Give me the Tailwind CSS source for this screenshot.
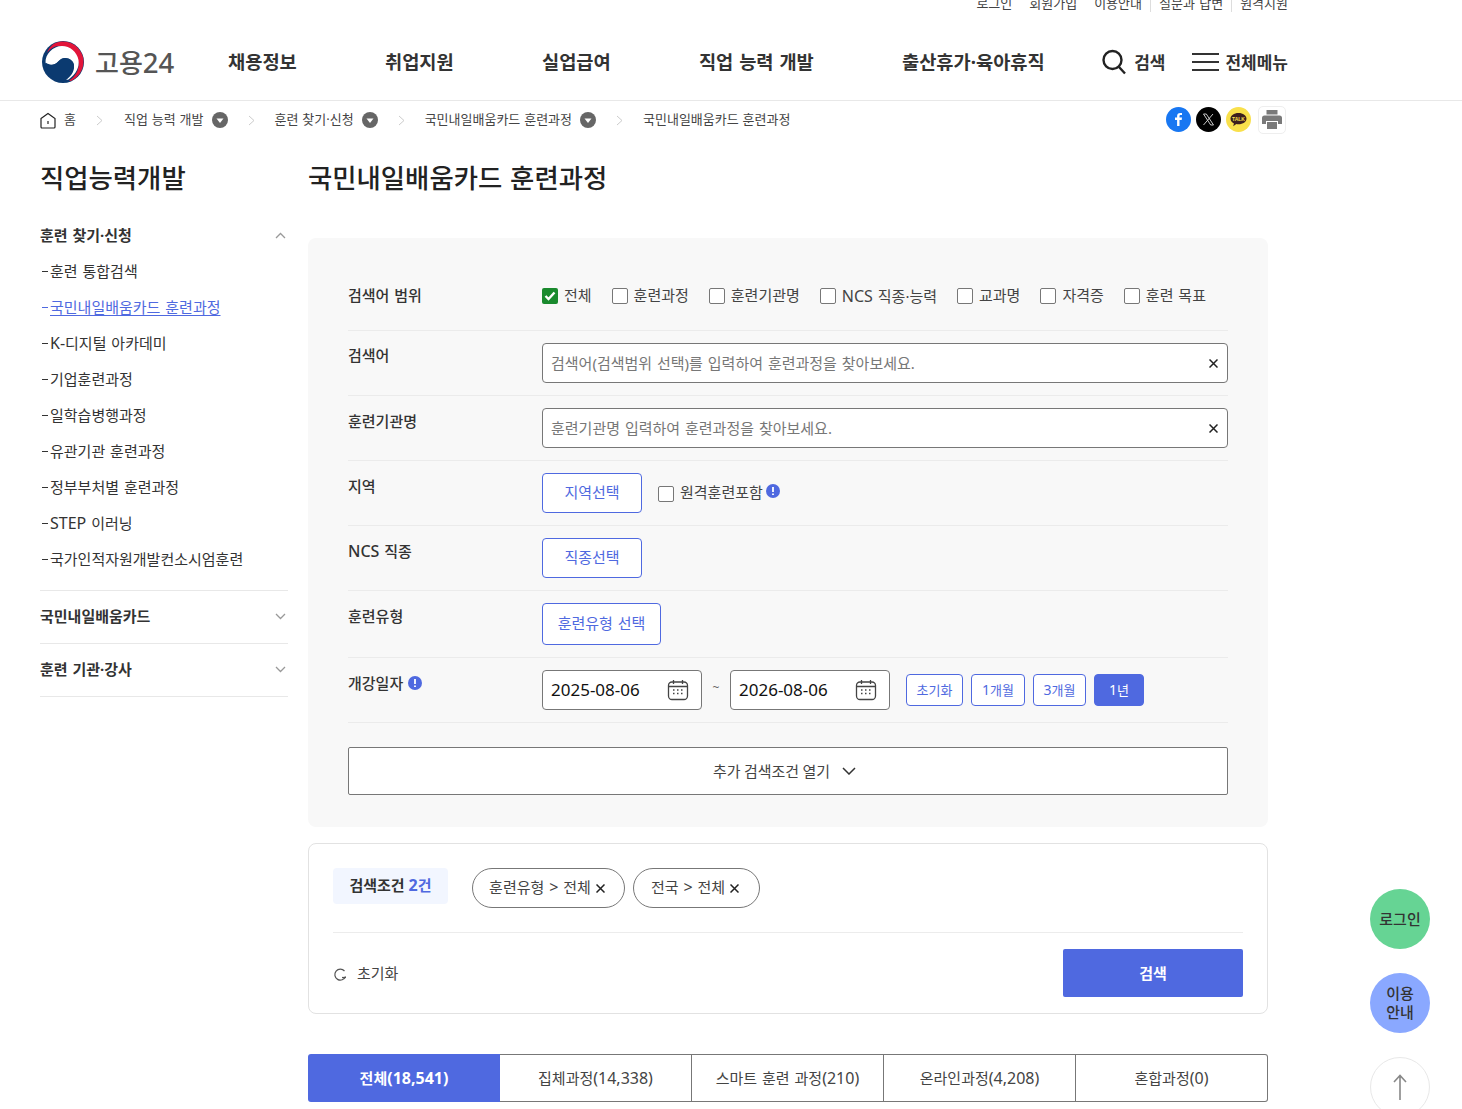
<!DOCTYPE html>
<html lang="ko"><head><meta charset="utf-8"><title>고용24</title>
<script src="https://cdn.jsdelivr.net/npm/@tailwindcss/browser@4"></script></head>
<body class="bg-white">
<div class="relative w-[1462px] h-[1109px] overflow-hidden bg-white text-[#222] [word-spacing:1px] font-['Noto_Sans','Noto_Sans_CJK_KR',sans-serif]">

<!-- util -->
<div class="h-[12px] pr-[174px] flex justify-end items-end text-[13px] leading-[18px] text-[#444] overflow-hidden">
  <span class="shrink-0 px-[8px]">로그인</span><span class="shrink-0 px-[9px]">회원가입</span><span class="shrink-0 px-[8px]">이용안내</span>
  <span class="shrink-0 border-l border-[#ddd] px-[8px]">질문과 답변</span>
  <span class="shrink-0 border-l border-[#ddd] pl-[8px]">원격지원</span>
</div>

<!-- header -->
<header class="h-[89px] border-b border-[#e8e8e8] pl-[42px] pr-[174px] flex items-center pt-[12px]">
  <svg class="w-[42px] h-[42px] shrink-0" viewBox="0 0 42 42"><circle cx="21" cy="21" r="21" fill="#0b3a70"/><path d="M17 1C27 -1 38 5 41 16c2 9-2 19-12 24l-2-.5c8-5 11-13 9-20C33 10 25 5 17 5 12 5 8 8 5 12 7 6 11 2 17 1Z" fill="#e2153a"/><path d="M3.500 22C3 13 11 5 20 5c8 0 15 6 16.500 14 1 7-2 14-10 19.500L24 39c5-4 8-8 8-13 0-5-4-9-9-9-5 0-7 5-10 6-4 2-7 1-9.500-1Z" fill="#fff"/><path d="M32 24c0 5-3 10-8 14.500-1 .5-2 .6-3 .5 -4 0-9-2-13-7-3-3-4-7-4.500-10.500 3 2 6 3 9.500 1.500 3-1.500 5-6 10-6s9 3.500 9 7Z" fill="#0b3a70"/></svg>
  <span class="ml-[11px] w-[133px] shrink-0 text-[26px] font-medium text-[#555] leading-none mt-[1px]">고용<span class="text-[27.500px]">24</span></span>
  <nav class="flex gap-[88.200px] text-[18.700px] leading-none font-bold text-[#333] mt-[1px]">
    <span>채용정보</span><span>취업지원</span><span>실업급여</span><span>직업 능력 개발</span><span>출산휴가·육아휴직</span>
  </nav>
  <div class="ml-auto flex items-center text-[17px] font-bold text-[#333] leading-none">
    <svg class="w-[24px] h-[26px] mr-[8px]" viewBox="0 0 24 26" fill="none" stroke="#222" stroke-width="2.400"><circle cx="10.500" cy="11" r="9"/><path d="M17 18l6 6.500"/></svg>
    <span>검색</span>
    <svg class="w-[27px] h-[20px] ml-[27px] mr-[6px]" viewBox="0 0 27 20" fill="none" stroke="#333" stroke-width="2.200"><path d="M0 2h27M0 10h27M0 18h27"/></svg>
    <span>전체메뉴</span>
  </div>
</header>

<!-- breadcrumb -->
<div class="h-[37px] pt-[1px] pl-[40px] pr-[176px] flex items-center text-[13px] text-[#444] [word-spacing:0.500px]">
  <svg class="w-[16px] h-[17px] mr-[8px]" viewBox="0 0 16 17" fill="none" stroke="#222" stroke-width="1.200"><path d="M1 6.500 8 1.500l7 5V15a1 1 0 0 1-1 1H2a1 1 0 0 1-1-1Z"/><path d="M8 9v3"/></svg>
  <span>홈</span>
  <svg class="w-[7px] h-[11px] mx-[20.500px]" viewBox="0 0 7 11" fill="none" stroke="#ccc"><path d="M1 1l5 4.500-5 4.500"/></svg>
  <span>직업 능력 개발</span>
  <svg class="w-[16px] h-[16px] ml-[8px]" viewBox="0 0 16 16"><circle cx="8" cy="8" r="8" fill="#666"/><path d="M4.500 6.500h7L8 11Z" fill="#fff"/></svg>
  <svg class="w-[7px] h-[11px] mx-[20px]" viewBox="0 0 7 11" fill="none" stroke="#ccc"><path d="M1 1l5 4.500-5 4.500"/></svg>
  <span>훈련 찾기·신청</span>
  <svg class="w-[16px] h-[16px] ml-[8px]" viewBox="0 0 16 16"><circle cx="8" cy="8" r="8" fill="#666"/><path d="M4.500 6.500h7L8 11Z" fill="#fff"/></svg>
  <svg class="w-[7px] h-[11px] mx-[20px]" viewBox="0 0 7 11" fill="none" stroke="#ccc"><path d="M1 1l5 4.500-5 4.500"/></svg>
  <span>국민내일배움카드 훈련과정</span>
  <svg class="w-[16px] h-[16px] ml-[8px]" viewBox="0 0 16 16"><circle cx="8" cy="8" r="8" fill="#666"/><path d="M4.500 6.500h7L8 11Z" fill="#fff"/></svg>
  <svg class="w-[7px] h-[11px] mx-[20px]" viewBox="0 0 7 11" fill="none" stroke="#ccc"><path d="M1 1l5 4.500-5 4.500"/></svg>
  <span>국민내일배움카드 훈련과정</span>
  <div class="ml-auto flex items-center gap-[5px] -mt-[1px]">
    <svg class="w-[25px] h-[25px]" viewBox="0 0 25 25"><circle cx="12.500" cy="12.500" r="12.500" fill="#1877f2"/><path d="M13.500 19v-6h2.200l.3-2.400h-2.500V9.200c0-.7.300-1.100 1.200-1.100H16V6c-.4 0-1.100-.1-1.800-.1-1.900 0-3.100 1.100-3.100 3.100v1.600H9V13h2.100v6Z" fill="#fff"/></svg>
    <svg class="w-[25px] h-[25px]" viewBox="0 0 25 25"><circle cx="12.500" cy="12.500" r="12.500" fill="#000"/><path d="M7.500 7h2.800l7.200 11h-2.800ZM17 7l-9.500 11" fill="none" stroke="#ddd" stroke-width=".9"/></svg>
    <svg class="w-[25px] h-[25px]" viewBox="0 0 25 25"><circle cx="12.500" cy="12.500" r="12.500" fill="#f9e04b"/><path d="M12.500 6C8 6 4.500 8.500 4.500 11.700c0 2 1.400 3.700 3.400 4.700l-.7 2.800 3.200-2.200c.6.100 1.300.2 2.100.2 4.500 0 8-2.500 8-5.500S17 6 12.500 6Z" fill="#3c1e1e"/><text x="12.500" y="13.600" text-anchor="middle" font-size="5" font-weight="700" fill="#f9e04b" font-family="Liberation Sans">TALK</text></svg>
    <div class="ml-[2px] w-[28px] h-[28px] border border-[#eee] rounded-[5px] flex items-center justify-center">
      <svg class="w-[20px] h-[19px]" viewBox="0 0 20 19" fill="#7a7a7a"><path d="M4.500 0h11v4.500h-11Z"/><path d="M2.500 5.500h15A2.500 2.500 0 0 1 20 8v6h-4v-3H4v3H0V8a2.500 2.500 0 0 1 2.500-2.500Z"/><path d="M5 12h10v7H5Z"/></svg>
    </div>
  </div>
</div>

<div class="flex pl-[40px]">
  <!-- sidebar -->
  <aside class="w-[248px] shrink-0 pt-[21px]">
    <h2 class="text-[26.400px] font-medium leading-[38px] text-[#222]">직업능력개발</h2>
    <div class="mt-[26px]">
      <div class="flex items-center justify-between h-[24px] text-[15px] font-bold text-[#333]">훈련 찾기·신청
        <svg class="w-[11px] h-[7px] mr-[2px]" viewBox="0 0 11 7" fill="none" stroke="#999" stroke-width="1.300"><path d="M1 6l4.500-4.500L10 6"/></svg></div>
      <ul class="mt-[6px] text-[15px] leading-[36px] text-[#333]">
        <li class="flex items-center"><span class="w-[6px] h-[1px] bg-[#333] ml-[2px] mr-[2px]"></span>훈련 통합검색</li>
        <li class="flex items-center text-[#4f69e0]"><span class="w-[6px] h-[1px] bg-[#4f69e0] ml-[2px] mr-[2px]"></span><span class="underline underline-offset-2">국민내일배움카드 훈련과정</span></li>
        <li class="flex items-center"><span class="w-[6px] h-[1px] bg-[#333] ml-[2px] mr-[2px]"></span><span><span class="text-[16px]">K-</span>디지털 아카데미</span></li>
        <li class="flex items-center"><span class="w-[6px] h-[1px] bg-[#333] ml-[2px] mr-[2px]"></span>기업훈련과정</li>
        <li class="flex items-center"><span class="w-[6px] h-[1px] bg-[#333] ml-[2px] mr-[2px]"></span>일학습병행과정</li>
        <li class="flex items-center"><span class="w-[6px] h-[1px] bg-[#333] ml-[2px] mr-[2px]"></span>유관기관 훈련과정</li>
        <li class="flex items-center"><span class="w-[6px] h-[1px] bg-[#333] ml-[2px] mr-[2px]"></span>정부부처별 훈련과정</li>
        <li class="flex items-center"><span class="w-[6px] h-[1px] bg-[#333] ml-[2px] mr-[2px]"></span><span><span class="text-[16px]">STEP</span> 이러닝</span></li>
        <li class="flex items-center"><span class="w-[6px] h-[1px] bg-[#333] ml-[2px] mr-[2px]"></span>국가인적자원개발컨소시엄훈련</li>
      </ul>
      <div class="mt-[13px] border-t border-[#e8e8e8] h-[53px] flex items-center justify-between pb-[2px] text-[15px] font-bold text-[#333]">국민내일배움카드
        <svg class="w-[11px] h-[7px] mr-[2px]" viewBox="0 0 11 7" fill="none" stroke="#999" stroke-width="1.300"><path d="M1 1l4.500 4.500L10 1"/></svg></div>
      <div class="border-t border-b border-[#e8e8e8] h-[54px] flex items-center justify-between pb-[2px] text-[15px] font-bold text-[#333]">훈련 기관·강사
        <svg class="w-[11px] h-[7px] mr-[2px]" viewBox="0 0 11 7" fill="none" stroke="#999" stroke-width="1.300"><path d="M1 1l4.500 4.500L10 1"/></svg></div>
    </div>
  </aside>

  <!-- main -->
  <main class="ml-[20px] w-[960px] shrink-0 pt-[21px]">
    <h1 class="text-[26.400px] font-medium leading-[38px] text-[#222]">국민내일배움카드 훈련과정</h1>

    <section class="mt-[41px] h-[589px] bg-[#f8f8f8] rounded-[8px] px-[40px] pt-[22px] text-[15px]">
      <div class="h-[71px] border-b border-[#ebebeb] flex items-center pt-[1px]">
        <div class="w-[194px] font-medium text-[#333]">검색어 범위</div>
        <div class="flex items-center gap-[20px] text-[#444]">
          <label class="flex items-center gap-[6px]"><span class="w-[16px] h-[16px] bg-[#1a8a2e] rounded-[2px] flex items-center justify-center"><svg class="w-[12px] h-[12px]" viewBox="0 0 12 12" fill="none" stroke="#fff" stroke-width="2.400"><path d="M1.500 6l3 3L10.500 2.500"/></svg></span>전체</label>
          <label class="flex items-center gap-[6px]"><span class="w-[16px] h-[16px] bg-white border border-[#777] rounded-[2px]"></span>훈련과정</label>
          <label class="flex items-center gap-[6px]"><span class="w-[16px] h-[16px] bg-white border border-[#777] rounded-[2px]"></span>훈련기관명</label>
          <label class="flex items-center gap-[6px]"><span class="w-[16px] h-[16px] bg-white border border-[#777] rounded-[2px]"></span><span><span class="text-[16px]">NCS</span> 직종·능력</span></label>
          <label class="flex items-center gap-[6px]"><span class="w-[16px] h-[16px] bg-white border border-[#777] rounded-[2px]"></span>교과명</label>
          <label class="flex items-center gap-[6px]"><span class="w-[16px] h-[16px] bg-white border border-[#777] rounded-[2px]"></span>자격증</label>
          <label class="flex items-center gap-[6px]"><span class="w-[16px] h-[16px] bg-white border border-[#777] rounded-[2px]"></span>훈련 목표</label>
        </div>
      </div>

      <div class="h-[65px] border-b border-[#ebebeb] flex pt-[12px]">
        <div class="w-[194px] font-medium text-[#333] leading-[24px]">검색어</div>
        <div class="w-[686px] h-[40px] bg-white border border-[#777] rounded-[4px] flex items-center justify-between pl-[8px] pr-[9px] text-[#777]">검색어(검색범위 선택)를 입력하여 훈련과정을 찾아보세요.
          <svg class="w-[9px] h-[9px]" viewBox="0 0 9 9" stroke="#222" stroke-width="1.500"><path d="M.5.500l8 8M8.500.500l-8 8"/></svg></div>
      </div>
      <div class="h-[65px] border-b border-[#ebebeb] flex pt-[12px]">
        <div class="w-[194px] font-medium text-[#333] leading-[26px]">훈련기관명</div>
        <div class="w-[686px] h-[40px] bg-white border border-[#777] rounded-[4px] flex items-center justify-between pl-[8px] pr-[9px] text-[#777]">훈련기관명 입력하여 훈련과정을 찾아보세요.
          <svg class="w-[9px] h-[9px]" viewBox="0 0 9 9" stroke="#222" stroke-width="1.500"><path d="M.5.500l8 8M8.500.500l-8 8"/></svg></div>
      </div>
      <div class="h-[65px] border-b border-[#ebebeb] flex pt-[12px]">
        <div class="w-[194px] font-medium text-[#333] leading-[26px]">지역</div>
        <div class="w-[100px] h-[40px] bg-white border border-[#4f69e0] rounded-[4px] flex items-center justify-center pb-[2px] text-[#4f69e0]">지역선택</div>
        <label class="ml-[16px] h-[40px] flex items-center gap-[6px] pb-[1px] text-[#444]"><span class="w-[16px] h-[16px] mt-[2px] bg-white border border-[#777] rounded-[2px]"></span>원격훈련포함
          <svg class="w-[14px] h-[14px] -ml-[3px] -mt-[3px]" viewBox="0 0 14 14"><circle cx="7" cy="7" r="7" fill="#4f69e0"/><path d="M7 3v5M7 9.500v1.500" stroke="#fff" stroke-width="1.800"/></svg></label>
      </div>
      <div class="h-[65px] border-b border-[#ebebeb] flex pt-[12px]">
        <div class="w-[194px] font-medium text-[#333] leading-[26px]"><span class="text-[16px]">NCS</span> 직종</div>
        <div class="w-[100px] h-[40px] bg-white border border-[#4f69e0] rounded-[4px] flex items-center justify-center pb-[2px] text-[#4f69e0]">직종선택</div>
      </div>
      <div class="h-[67px] border-b border-[#ebebeb] flex pt-[12px]">
        <div class="w-[194px] font-medium text-[#333] leading-[26px]">훈련유형</div>
        <div class="w-[119px] h-[42px] bg-white border border-[#4f69e0] rounded-[4px] flex items-center justify-center pb-[2px] text-[#4f69e0]">훈련유형 선택</div>
      </div>
      <div class="h-[65px] border-b border-[#ebebeb] flex pt-[12px]">
        <div class="w-[194px] font-medium text-[#333] flex items-center h-[26px] gap-[5px] pt-[1px]">개강일자 <svg class="w-[14px] h-[14px] -mt-[1px]" viewBox="0 0 14 14"><circle cx="7" cy="7" r="7" fill="#4f69e0"/><path d="M7 3v5M7 9.500v1.500" stroke="#fff" stroke-width="1.800"/></svg></div>
        <div class="w-[160px] h-[40px] bg-white border border-[#777] rounded-[4px] flex items-center justify-between pl-[8px] pr-[12px] text-[17px] text-[#111]">2025-08-06
          <svg class="w-[22px] h-[22px]" viewBox="0 0 22 22" fill="none" stroke="#444" stroke-width="1.300"><rect x="1.500" y="3" width="19" height="17.500" rx="3.500"/><path d="M1.500 7.500h19M6.500 1v4M15.500 1v4"/><path d="M6 11h2M10 11h2M14 11h2M6 14.500h2M10 14.500h2M14 14.500h2" stroke-dasharray="1.500 0.500"/></svg></div>
        <div class="w-[28px] text-center text-[12px] leading-[36px] text-[#666]">~</div>
        <div class="w-[160px] h-[40px] bg-white border border-[#777] rounded-[4px] flex items-center justify-between pl-[8px] pr-[12px] text-[17px] text-[#111]">2026-08-06
          <svg class="w-[22px] h-[22px]" viewBox="0 0 22 22" fill="none" stroke="#444" stroke-width="1.300"><rect x="1.500" y="3" width="19" height="17.500" rx="3.500"/><path d="M1.500 7.500h19M6.500 1v4M15.500 1v4"/><path d="M6 11h2M10 11h2M14 11h2M6 14.500h2M10 14.500h2M14 14.500h2" stroke-dasharray="1.500 0.500"/></svg></div>
        <div class="ml-[16px] mt-[4px] flex gap-[8px] text-[13px] text-[#4f69e0] h-[32px]">
          <span class="w-[57px] border border-[#4f69e0] rounded-[4px] bg-white flex items-center justify-center pt-[1px]">초기화</span>
          <span class="w-[54px] border border-[#4f69e0] rounded-[4px] bg-white flex items-center justify-center pb-[1px]"><span><span class="text-[14px]">1</span>개월</span></span>
          <span class="w-[53px] border border-[#4f69e0] rounded-[4px] bg-white flex items-center justify-center pb-[1px]"><span><span class="text-[14px]">3</span>개월</span></span>
          <span class="w-[50px] border border-[#4f69e0] rounded-[4px] bg-[#4f69e0] text-white flex items-center justify-center pb-[1px]"><span><span class="text-[14px]">1</span>년</span></span>
        </div>
      </div>
      <div class="mt-[24px] h-[48px] bg-white border border-[#777] rounded-[2px] flex items-center justify-center gap-[12px] pr-[7px] text-[#444] [word-spacing:-0.500px]">추가 검색조건 열기
        <svg class="w-[14px] h-[8px]" viewBox="0 0 14 8" fill="none" stroke="#333" stroke-width="1.500"><path d="M1 1l6 6 6-6"/></svg></div>
    </section>

    <section class="mt-[16px] h-[171px] border border-[#e2e2e2] rounded-[8px] px-[24px] pt-[24px] text-[15px]">
      <div class="h-[65px] border-b border-[#ececec] flex items-start">
        <div class="w-[115px] h-[36px] rounded-[4px] bg-[#f2f6ff] flex items-center justify-center pb-[2px] font-bold text-[#333] gap-[4px]">검색조건 <span class="text-[#4f69e0]"><span class="text-[16px]">2</span>건</span></div>
        <div class="ml-[24px] h-[40px] w-[153px] rounded-full border border-[#777] bg-white flex items-center justify-center gap-[5px] pb-[3px] pr-[3px] text-[#444]"><span>훈련유형 <span class="text-[16px]">&gt;</span> 전체</span> <svg class="w-[9px] h-[9px] mt-[4px]" viewBox="0 0 9 9" stroke="#222" stroke-width="1.500"><path d="M.5.500l8 8M8.500.500l-8 8"/></svg></div>
        <div class="ml-[8px] h-[40px] w-[127px] rounded-full border border-[#777] bg-white flex items-center justify-center gap-[5px] pb-[3px] pr-[3px] text-[#444]"><span>전국 <span class="text-[16px]">&gt;</span> 전체</span> <svg class="w-[9px] h-[9px] mt-[4px]" viewBox="0 0 9 9" stroke="#222" stroke-width="1.500"><path d="M.5.500l8 8M8.500.500l-8 8"/></svg></div>
      </div>
      <div class="mt-[16px] flex items-center justify-between">
        <div class="flex items-center gap-[10px] text-[#444] pt-[1px]"><svg class="w-[14px] h-[14px] mt-[2px]" viewBox="0 0 14 14" fill="none" stroke="#555" stroke-width="1.200"><path d="M11.500 3A5.500 5.500 0 1 0 12.500 8.500"/><path d="M9 9.500h4" /></svg>초기화</div>
        <div class="w-[180px] h-[48px] bg-[#4f69e0] rounded-[2px] text-white font-bold flex items-center justify-center pt-[1px]">검색</div>
      </div>
    </section>

    <div class="mt-[40px] flex h-[48px] text-[15px] text-[#444]">
      <div class="w-[192px] bg-[#4f69e0] text-white font-bold rounded-l-[3px] flex items-center justify-center pb-[1px]"><span>전체<span class="text-[16px]">(18,541)</span></span></div>
      <div class="w-[192px] border-y border-r border-[#777] flex items-center justify-center pb-[1px]"><span>집체과정<span class="text-[16px]">(14,338)</span></span></div>
      <div class="w-[192px] border-y border-r border-[#777] flex items-center justify-center pb-[1px]"><span>스마트 훈련 과정<span class="text-[16px]">(210)</span></span></div>
      <div class="w-[192px] border-y border-r border-[#777] flex items-center justify-center pb-[1px]"><span>온라인과정<span class="text-[16px]">(4,208)</span></span></div>
      <div class="w-[192px] border-y border-r border-[#777] rounded-r-[3px] flex items-center justify-center pb-[1px]"><span>혼합과정<span class="text-[16px]">(0)</span></span></div>
    </div>
  </main>
</div>

<!-- floating -->
<div class="absolute left-[1370px] top-[889px] flex flex-col gap-[24px]">
  <div class="w-[60px] h-[60px] rounded-full bg-[#66d494] flex items-center justify-center pt-[1px] text-[15px] font-medium text-[#333]">로그인</div>
  <div class="w-[60px] h-[60px] rounded-full bg-[#8aa8ff] flex items-center justify-center text-center text-[15px] leading-[19px] font-medium pb-[1px] text-[#333]">이용<br>안내</div>
  <div class="w-[60px] h-[60px] rounded-full bg-white border border-[#e8e8e8] flex items-center justify-center">
    <svg class="w-[14px] h-[26px]" viewBox="0 0 14 26" fill="none" stroke="#888" stroke-width="1.600"><path d="M7 26V1.500M1 8l6-6.500L13 8"/></svg></div>
</div>
</div>
</body></html>
